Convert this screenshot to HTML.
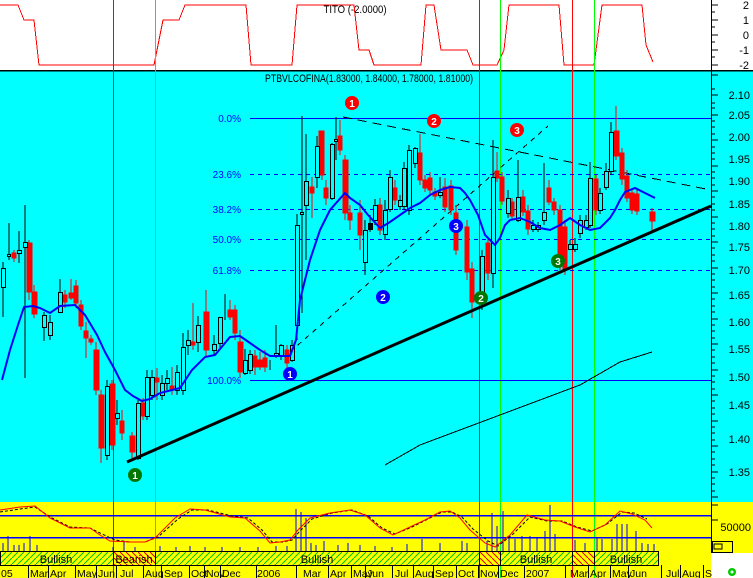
<!DOCTYPE html>
<html><head><meta charset="utf-8"><style>
html,body{margin:0;padding:0;width:753px;height:578px;overflow:hidden;background:#fff}
svg{display:block}
text{font-family:"Liberation Sans",sans-serif}
</style></head><body>
<svg width="753" height="578" xmlns="http://www.w3.org/2000/svg" shape-rendering="crispEdges">
<rect x="0" y="0" width="753" height="70" fill="#fff"/>
<rect x="0" y="70" width="753" height="432" fill="#00ffff"/>
<rect x="0" y="502" width="753" height="51" fill="#ffff00"/>
<rect x="0" y="553" width="711" height="25" fill="#ffff00"/>
<!-- top panel -->
<polyline fill="none" stroke="#f00" stroke-width="1" points="0,5 18,5 24,20 34,20 39,65 154,65 163,20 179,20 185,5 246,5 251,65 292,65 297,5 354,5 359,50 369,50 374,65 421,65 426,5 434,5 441,50 467,50 473,65 497,65 504,50 509,5 559,5 564,65 594,65 602,5 642,5 646,45 653,62"/>
<text x="355" y="13" font-size="11" text-anchor="middle" textLength="63" lengthAdjust="spacingAndGlyphs">TITO (-2.0000)</text>
<line x1="0" y1="70.5" x2="753" y2="70.5" stroke="#000" stroke-width="1.5"/>
<!-- vertical lines -->
<g stroke-width="1">
<line x1="113.5" y1="0" x2="113.5" y2="578" stroke="#f00"/>
<line x1="479.5" y1="0" x2="479.5" y2="578" stroke="#f00"/>
<line x1="572.5" y1="0" x2="572.5" y2="578" stroke="#f00"/>
<line x1="155.5" y1="0" x2="155.5" y2="578" stroke="#0f0"/>
<line x1="500.5" y1="0" x2="500.5" y2="578" stroke="#0f0"/>
<line x1="594.5" y1="0" x2="594.5" y2="578" stroke="#0f0"/>
</g>
<text x="369" y="82" font-size="11" text-anchor="middle" textLength="208" lengthAdjust="spacingAndGlyphs">PTBVLCOFINA(1.83000, 1.84000, 1.78000, 1.81000)</text>
<!-- fib -->
<g stroke="#00f" stroke-width="1">
<line x1="250" y1="118.5" x2="711" y2="118.5"/>
<line x1="250" y1="380.5" x2="711" y2="380.5"/>
<g stroke-dasharray="4,4">
<line x1="250" y1="174.5" x2="711" y2="174.5"/>
<line x1="250" y1="209.5" x2="711" y2="209.5"/>
<line x1="250" y1="239.5" x2="711" y2="239.5"/>
<line x1="250" y1="270.5" x2="711" y2="270.5"/>
</g></g>
<g font-size="10" fill="#00f" text-anchor="end">
<text x="241" y="122">0.0%</text>
<text x="241" y="178">23.6%</text>
<text x="241" y="213">38.2%</text>
<text x="241" y="243">50.0%</text>
<text x="241" y="274">61.8%</text>
<text x="241" y="384">100.0%</text>
</g>
<!-- trend lines -->
<line x1="343" y1="117" x2="711" y2="190" stroke="#000" stroke-dasharray="9,6"/>
<line x1="290" y1="352" x2="548" y2="126" stroke="#000" stroke-dasharray="5,5"/>
<polyline fill="none" stroke="#000" points="385,465 420,445 460,430 500,415 540,400 580,385 620,362 652,352"/>
<!-- candles -->
<g stroke="#f00" fill="#f00">
<path d="M14,250V262M29,240V300M34,285V318M65,290V308M71,279V300M76,280V308M81,300V330M86,322V358M91,335V345M96,342V395M101,390V463M112,380V450M122,410V440M132,432V460M143,398V420M157,368V400M172,367V395M193,303V350M206,290V357M230,300V320M235,305V340M240,330V378M255,350V375M260,352V370M265,350V372M287,345V368M312,177V218M322,131V180M326,180V205M340,120V155M345,155V220M350,205V230M360,200V250M380,198V235M395,180V205M420,134V185M425,175V192M430,172V195M435,188V200M445,178V212M451,180V215M456,205V255M467,220V280M472,262V318M488,238V280M497,152V182M502,172V205M512,198V220M523,190V216M528,205V235M549,180V205M554,198V215M560,205V270M565,220V275M596,175V215M616,106V160M622,148V185M627,170V202M632,188V214M637,190V215M652,208V232"/>
<rect x="12" y="253" width="4" height="5"/><rect x="27" y="243" width="5" height="49"/><rect x="32" y="292" width="5" height="22"/><rect x="63" y="295" width="4" height="7"/><rect x="69" y="293" width="4" height="5"/><rect x="74" y="286" width="4" height="17"/><rect x="79" y="305" width="4" height="21"/><rect x="84" y="331" width="4" height="7"/><rect x="89" y="339" width="4" height="3"/><rect x="94" y="350" width="5" height="40"/><rect x="99" y="395" width="5" height="53"/><rect x="110" y="384" width="5" height="61"/><rect x="120" y="421" width="4" height="12"/><rect x="130" y="436" width="5" height="16"/><rect x="141" y="403" width="4" height="13"/><rect x="155" y="378" width="4" height="4"/><rect x="170" y="386" width="4" height="4"/><rect x="191" y="342" width="4" height="3"/><rect x="204" y="312" width="5" height="38"/><rect x="228" y="310" width="4" height="7"/><rect x="233" y="310" width="4" height="23"/><rect x="238" y="342" width="5" height="30"/><rect x="253" y="356" width="4" height="11"/><rect x="258" y="360" width="4" height="7"/><rect x="263" y="358" width="4" height="9"/><rect x="285" y="350" width="4" height="13"/><rect x="310" y="187" width="4" height="6"/><rect x="319" y="131" width="5" height="44"/><rect x="324" y="188" width="4" height="10"/><rect x="338" y="136" width="4" height="14"/><rect x="343" y="160" width="5" height="53"/><rect x="348" y="213" width="4" height="7"/><rect x="358" y="213" width="4" height="22"/><rect x="378" y="205" width="4" height="25"/><rect x="393" y="188" width="4" height="12"/><rect x="418" y="153" width="4" height="27"/><rect x="423" y="180" width="4" height="8"/><rect x="428" y="178" width="4" height="12"/><rect x="433" y="192" width="4" height="4"/><rect x="443" y="187" width="4" height="20"/><rect x="449" y="186" width="4" height="24"/><rect x="454" y="213" width="4" height="37"/><rect x="465" y="227" width="4" height="45"/><rect x="470" y="269" width="4" height="33"/><rect x="486" y="243" width="4" height="30"/><rect x="495" y="171" width="4" height="7"/><rect x="500" y="177" width="4" height="24"/><rect x="510" y="202" width="4" height="14"/><rect x="521" y="197" width="4" height="15"/><rect x="526" y="211" width="4" height="18"/><rect x="547" y="188" width="4" height="14"/><rect x="552" y="202" width="4" height="8"/><rect x="558" y="210" width="4" height="53"/><rect x="563" y="227" width="4" height="43"/><rect x="594" y="179" width="4" height="31"/><rect x="614" y="131" width="5" height="25"/><rect x="620" y="153" width="4" height="26"/><rect x="625" y="176" width="4" height="22"/><rect x="630" y="193" width="4" height="17"/><rect x="635" y="194" width="4" height="17"/><rect x="650" y="212" width="5" height="9"/>
</g>
<g stroke="#000" fill="#00ffff">
<path d="M3,262V317M9,223V260M19,231V263M25,205V378M44,312V341M50,315V340M60,279V312M107,380V460M117,400V425M138,400V460M147,370V420M152,370V400M162,375V400M167,370V390M177,365V395M183,333V395M188,330V355M198,316V352M214,335V355M220,318V348M225,294V320M245,349V375M250,350V374M270,360V370M276,325V358M281,344V360M292,340V362M297,214V340M302,116V313M306,134V260M317,136V188M332,143V200M336,117V160M365,220V275M370,215V232M375,199V225M385,200V240M390,170V212M400,195V210M404,162V210M409,145V215M415,147V168M440,177V198M482,250V310M493,140V288M508,190V218M518,160V222M533,220V232M538,222V232M544,163V225M570,240V250M575,238V252M580,215V238M586,215V230M590,162V228M600,188V214M606,163V190M611,122V175"/>
<rect x="1.5" y="268.5" width="4" height="19"/><rect x="7.5" y="254.5" width="3" height="2"/><rect x="17.5" y="250.5" width="4" height="3"/><rect x="23.5" y="242.5" width="4" height="5"/><rect x="42.5" y="315.5" width="4" height="12"/><rect x="48.5" y="322.5" width="4" height="13"/><rect x="58.5" y="292.5" width="4" height="20"/><rect x="105.5" y="386.5" width="4" height="69"/><rect x="115.5" y="413.5" width="4" height="5"/><rect x="136.5" y="403.5" width="4" height="55"/><rect x="145.5" y="377.5" width="4" height="39"/><rect x="150.5" y="377.5" width="4" height="18"/><rect x="160.5" y="383.5" width="4" height="12"/><rect x="165.5" y="378.5" width="4" height="5"/><rect x="175.5" y="372.5" width="4" height="18"/><rect x="181.5" y="347.5" width="4" height="43"/><rect x="186.5" y="340.5" width="4" height="5"/><rect x="196.5" y="325.5" width="4" height="17"/><rect x="212.5" y="344.5" width="4" height="6"/><rect x="218.5" y="317.5" width="4" height="26"/><rect x="243.5" y="360.5" width="4" height="13"/><rect x="248.5" y="354.5" width="4" height="16"/><rect x="274.5" y="353.5" width="4" height="3"/><rect x="279.5" y="345.5" width="4" height="11"/><rect x="290.5" y="345.5" width="4" height="15"/><rect x="295.5" y="225.5" width="4" height="100"/><rect x="300.5" y="212.5" width="3" height="2"/><rect x="304.5" y="181.5" width="4" height="24"/><rect x="315.5" y="146.5" width="4" height="31"/><rect x="330.5" y="144.5" width="4" height="54"/><rect x="334.5" y="139.5" width="3" height="2"/><rect x="363.5" y="230.5" width="4" height="32"/><rect x="368.5" y="223.5" width="4" height="6" fill="#000"/><rect x="373.5" y="205.5" width="4" height="15"/><rect x="383.5" y="210.5" width="4" height="24"/><rect x="388.5" y="177.5" width="4" height="32"/><rect x="398.5" y="200.5" width="4" height="6"/><rect x="402.5" y="168.5" width="4" height="38"/><rect x="407.5" y="150.5" width="4" height="60"/><rect x="413.5" y="148.5" width="4" height="15"/><rect x="438.5" y="192.5" width="4" height="3"/><rect x="480.5" y="256.5" width="4" height="47"/><rect x="491.5" y="177.5" width="4" height="96"/><rect x="506.5" y="198.5" width="4" height="15"/><rect x="516.5" y="197.5" width="4" height="23"/><rect x="531.5" y="225.5" width="4" height="4"/><rect x="536.5" y="225.5" width="4" height="4"/><rect x="542.5" y="212.5" width="4" height="8"/><rect x="568.5" y="244.5" width="4" height="5"/><rect x="573.5" y="244.5" width="4" height="5"/><rect x="578.5" y="220.5" width="4" height="13"/><rect x="584.5" y="220.5" width="4" height="7"/><rect x="588.5" y="178.5" width="4" height="47"/><rect x="598.5" y="193.5" width="4" height="17"/><rect x="604.5" y="171.5" width="4" height="16"/><rect x="609.5" y="132.5" width="4" height="39"/>
</g>
<!-- MA -->
<polyline fill="none" stroke="#00f" stroke-width="2" shape-rendering="auto" points="2,380 10,350 18,325 24,307 33,306 40,308 50,313 60,306 75,305 85,315 97,335 105,352 115,370 125,390 133,396 142,401 150,399 160,393 172,390 180,388 192,370 205,357 215,355 230,337 240,336 250,343 260,350 270,356 280,356 290,356 296,340 300,300 310,260 320,230 330,210 345,193 350,198 360,205 368,215 380,228 390,222 400,215 410,208 420,203 430,195 440,190 450,187 460,188 465,193 470,200 478,215 485,235 490,240 495,245 500,238 505,225 510,220 520,218 530,222 540,228 550,230 560,225 570,218 580,225 590,230 600,228 610,218 615,210 620,200 625,192 635,188 645,193 655,198"/>
<!-- support line -->
<line x1="127" y1="462" x2="711" y2="206" stroke="#000" stroke-width="3" shape-rendering="auto"/>
<!-- numbered circles -->
<g font-size="10" font-weight="bold" fill="#fff" text-anchor="middle" shape-rendering="auto">
<circle cx="352" cy="103" r="7" fill="#f00"/><text x="352" y="107">1</text>
<circle cx="434" cy="121" r="7" fill="#f00"/><text x="434" y="125">2</text>
<circle cx="517" cy="130" r="7" fill="#f00"/><text x="517" y="134">3</text>
<circle cx="290" cy="374" r="7" fill="#00f"/><text x="290" y="378">1</text>
<circle cx="383" cy="297" r="7" fill="#00f"/><text x="383" y="301">2</text>
<circle cx="456" cy="226" r="7" fill="#00f"/><text x="456" y="230">3</text>
<circle cx="135" cy="475" r="7" fill="#070"/><text x="135" y="479">1</text>
<circle cx="481" cy="298" r="7" fill="#070"/><text x="481" y="302">2</text>
<circle cx="558" cy="261" r="7" fill="#070"/><text x="558" y="265">3</text>
</g>
<!-- right axis -->
<line x1="711.5" y1="0" x2="711.5" y2="553" stroke="#000"/>
<path stroke="#000" d="M711,5h7M711,12h4M711,20h7M711,27h4M711,35h7M711,42h4M711,50h7M711,57h4M711,65h7M711,75h7M711,89h4M711,95h7M711,103h4M711,108h4M711,115h7M711,121h4M711,127h4M711,134h4M711,140h7M711,147h4M711,153h4M711,159h4M711,166h7M711,172h4M711,178h4M711,185h4M711,191h7M711,197h4M711,204h4M711,210h4M711,217h7M711,223h4M711,229h4M711,236h4M711,242h7M711,248h4M711,255h4M711,261h4M711,268h7M711,274h4M711,280h4M711,287h4M711,293h7M711,299h4M711,306h4M711,312h4M711,319h7M711,325h4M711,331h4M711,338h4M711,344h7M711,350h4M711,357h4M711,363h4M711,370h7M711,376h4M711,382h4M711,389h4M711,395h7M711,401h4M711,408h4M711,414h4M711,421h7M711,427h4M711,433h4M711,440h4M711,446h7M711,452h4M711,459h4M711,465h4M711,472h7M711,478h4M711,484h4M711,491h4M711,497h7M711,505h7M711,520h7"/>
<g font-size="11" text-anchor="end">
<text x="749" y="9">2</text><text x="749" y="24">1</text><text x="749" y="39">0</text><text x="749" y="54">-1</text><text x="749" y="69">-2</text>
<text x="750" y="99">2.10</text><text x="750" y="119">2.05</text><text x="750" y="141">2.00</text><text x="750" y="163">1.95</text><text x="750" y="185">1.90</text><text x="750" y="208">1.85</text><text x="750" y="230">1.80</text><text x="750" y="251">1.75</text><text x="750" y="274">1.70</text><text x="750" y="299">1.65</text><text x="750" y="326">1.60</text><text x="750" y="353">1.55</text><text x="750" y="381">1.50</text><text x="750" y="409">1.45</text><text x="750" y="443">1.40</text><text x="750" y="476">1.35</text>
<text x="751" y="531">50000</text>
</g>
<rect x="712.5" y="541.5" width="20" height="11" fill="none" stroke="#000"/>
<rect x="714" y="544" width="8" height="5" fill="none" stroke="#000"/>
<!-- bottom panel -->
<line x1="0" y1="515.5" x2="711" y2="515.5" stroke="#00f" stroke-width="1.5"/>
<line x1="0" y1="537.5" x2="711" y2="537.5" stroke="#00f" stroke-width="1.5"/>
<path stroke="#00f" d="M3,551v-8M8,551v-15M14,551v-6M19,551v-6M24,551v-8M30,551v-15M37,551v-6M113,551v-4M124,551v-9M135,551v-4M160,551v-5M176,551v-4M190,551v-5M205,551v-4M222,551v-4M240,551v-4M258,551v-4M276,551v-5M287,551v-5M296,551v-42M301,551v-39M306,551v-33M311,551v-8M316,551v-6M324,551v-10M338,551v-6M348,551v-8M360,551v-6M375,551v-5M392,551v-4M407,551v-7M422,551v-12M440,551v-8M462,551v-10M467,551v-8M487,551v-10M492,551v-38M497,551v-25M503,551v-40M509,551v-15M515,551v-12M522,551v-15M530,551v-15M537,551v-14M545,551v-20M550,551v-46M555,551v-17M575,551v-11M585,551v-8M597,551v-14M602,551v-12M612,551v-12M617,551v-27M622,551v-27M627,551v-27M636,551v-20M642,551v-8M648,551v-7M654,551v-7"/>
<polyline fill="none" stroke="#000" stroke-dasharray="3,2" shape-rendering="auto" points="0,512 20,509 35,507 52,518 70,527 90,528 102,534 115,540 130,542 145,542 158,537 178,519 192,510 208,510 232,516 248,518 262,530 272,542 283,542 292,540 300,531 312,519 332,513 352,510 368,516 382,528 395,534 412,527 428,519 442,512 452,512 462,517 473,529 488,541 498,546 513,534 530,517 547,521 562,521 577,527 592,531 607,524 622,512 634,513 647,519"/>
<polyline fill="none" stroke="#f00" shape-rendering="auto" points="0,510 20,507 35,506 50,518 70,528 90,528 100,535 110,541 130,542 145,542 155,538 175,518 190,509 205,510 230,517 245,518 260,531 270,543 280,542 290,540 298,530 310,518 330,513 350,510 365,515 380,528 393,535 410,527 425,520 440,512 450,511 460,518 470,530 485,543 495,547 510,535 527,515 545,520 560,521 575,527 590,532 605,525 620,511 632,514 645,520 652,528"/>
<!-- pattern bands -->
<defs>
<pattern id="g" width="6" height="6" patternUnits="userSpaceOnUse"><rect width="6" height="6" fill="#ffff00"/><path d="M0,6L6,0" stroke="#0c0" stroke-width="1"/></pattern>
<pattern id="r" width="6" height="6" patternUnits="userSpaceOnUse"><rect width="6" height="6" fill="#ffff00"/><path d="M0,0L6,6" stroke="#f00" stroke-width="1"/></pattern>
</defs>
<g stroke="#000">
<rect x="0.5" y="551.5" width="113" height="14" fill="url(#g)"/>
<rect x="113.5" y="551.5" width="42" height="14" fill="url(#r)"/>
<rect x="155.5" y="551.5" width="324" height="14" fill="url(#g)"/>
<rect x="479.5" y="551.5" width="21" height="14" fill="url(#r)"/>
<rect x="500.5" y="551.5" width="72" height="14" fill="url(#g)"/>
<rect x="572.5" y="551.5" width="22" height="14" fill="url(#r)"/>
<rect x="594.5" y="551.5" width="64" height="14" fill="url(#g)"/>
</g>
<g font-size="11" text-anchor="middle">
<text x="56" y="563">Bullish</text><text x="134" y="563">Bearish</text><text x="317" y="563">Bullish</text><text x="536" y="563">Bullish</text><text x="626" y="563">Bullish</text>
</g>
<path stroke="#000" d="M28.5,565v13M48.5,565v13M75.5,565v13M96.5,565v13M116.5,565v13M143.5,565v13M161.5,565v13M189.5,565v13M204.5,565v13M220.5,565v13M256.5,565v13M296.5,565v13M328.5,565v13M351.5,565v13M365.5,565v13M392.5,565v13M413.5,565v13M433.5,565v13M456.5,565v13M478.5,565v13M498.5,565v13M524.5,565v13M565.5,565v13M588.5,565v13M610.5,565v13M628.5,565v13M661.5,565v13M680.5,565v13M703.5,565v13"/>
<g font-size="10.5">
<text x="1" y="577">05</text><text x="30" y="577">Mar</text><text x="50" y="577">Apr</text><text x="77" y="577">May</text><text x="98" y="577">Jun</text><text x="120" y="577">Jul</text><text x="145" y="577">Aug</text><text x="164" y="577">Sep</text><text x="191" y="577">Oct</text><text x="206" y="577">Nov</text><text x="222" y="577">Dec</text><text x="257" y="577">2006</text><text x="303" y="577">Mar</text><text x="330" y="577">Apr</text><text x="353" y="577">May</text><text x="367" y="577">Jun</text><text x="395" y="577">Jul</text><text x="415" y="577">Aug</text><text x="435" y="577">Sep</text><text x="458" y="577">Oct</text><text x="480" y="577">Nov</text><text x="500" y="577">Dec</text><text x="526" y="577">2007</text><text x="570" y="577">Mar</text><text x="590" y="577">Apr</text><text x="612" y="577">May</text><text x="630" y="577">Jun</text><text x="666" y="577">Jul</text><text x="682" y="577">Aug</text><text x="705" y="577">S</text>
</g>
<circle cx="732" cy="572" r="4" fill="#0c0" shape-rendering="auto"/>
<circle cx="732" cy="572" r="1.5" fill="#fff" shape-rendering="auto"/>
</svg>
</body></html>
